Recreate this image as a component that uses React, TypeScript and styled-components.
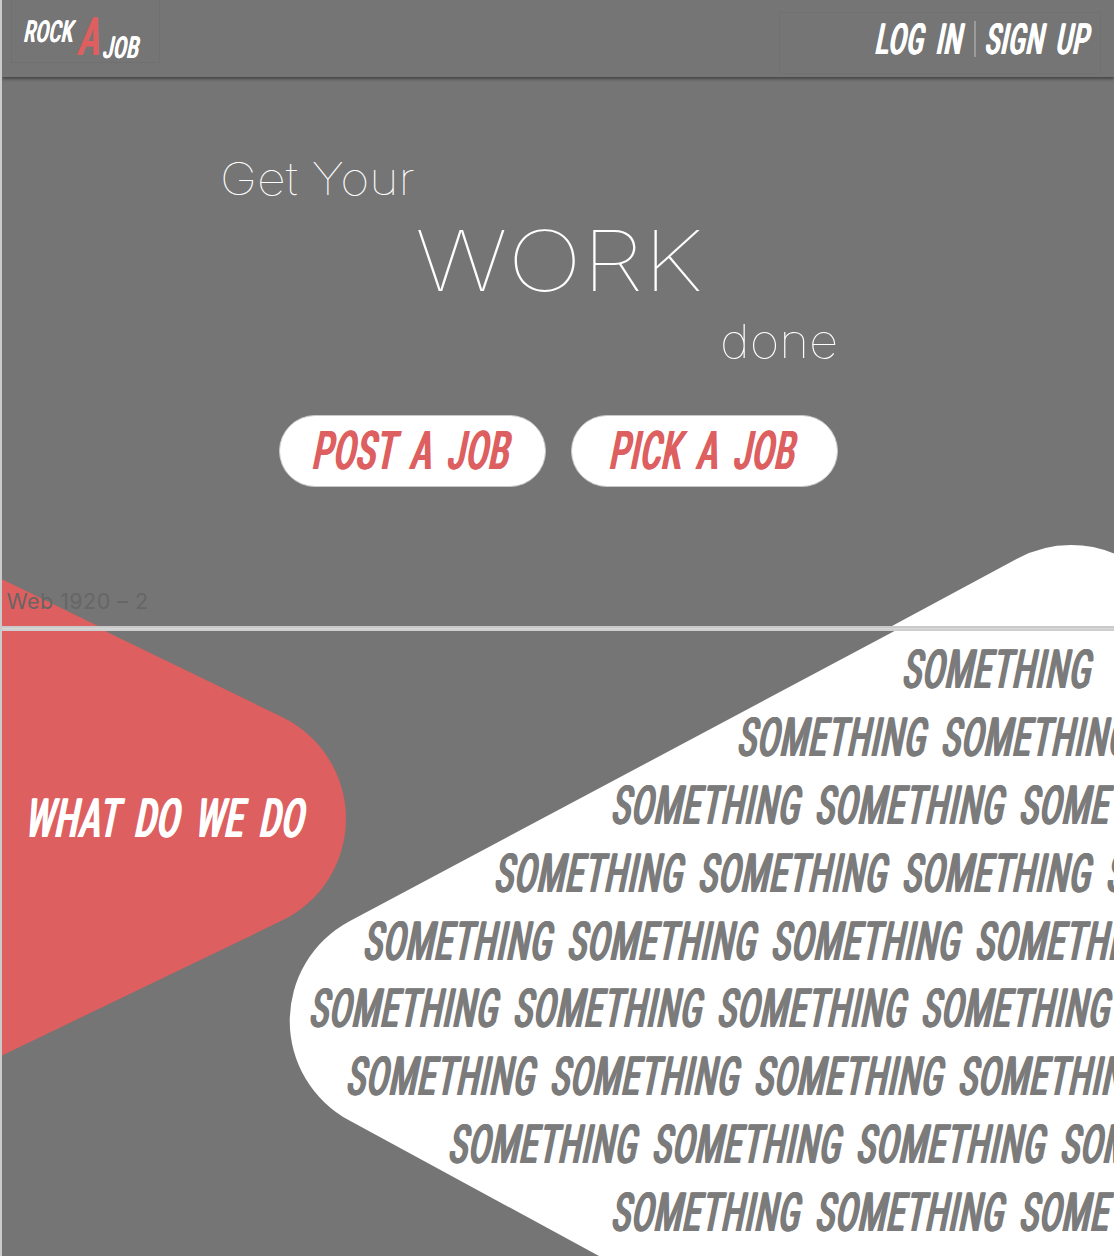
import React, { useLayoutEffect, useRef, useState } from "react";
import styled, { createGlobalStyle } from "styled-components";

const GREY = "#757575";
const RED = "#dd5f5f";

const GlobalStyle = createGlobalStyle`
  html, body { margin: 0; padding: 0; background: ${GREY}; }
  body { overflow: hidden; }
  *, *::before, *::after { box-sizing: border-box; }
`;

const Page = styled.div`
  position: relative;
  display: flex;
  flex-direction: column;
  width: 1114px;
  height: 1256px;
  overflow: hidden;
  background: ${GREY};
  border-left: 2px solid #cbcbcb;
`;

const Shapes = styled.svg`
  position: absolute;
  left: -2px;
  top: 0;
  width: 1114px;
  height: 1256px;
`;

const FitBox = styled.span<{ $w: number; $cap: number; $color: string }>`
  display: block;
  flex: none;
  width: ${(p) => p.$w}px;
  height: ${(p) => p.$cap}px;
  color: ${(p) => p.$color};
`;

/* The sideways shadows thicken only the upright strokes, which evens out
   the narrowed letters into a single stroke width. */
const Slanted = styled.span<{ $cap: number; $weight: number }>`
  display: inline-block;
  white-space: nowrap;
  font-family: Roboto, "Liberation Sans", sans-serif;
  font-weight: ${(p) => p.$weight};
  font-size: ${(p) => p.$cap / 0.711}px;
  line-height: ${(p) => p.$cap}px;
  letter-spacing: 0.035em;
  margin-right: -0.035em;
  word-spacing: 0.2em;
  text-shadow: -0.025em 0 0 currentColor, 0.025em 0 0 currentColor;
  transform-origin: 0 100%;
`;

const Hairline = styled.span<{ $cap: number; $weight: number }>`
  display: inline-block;
  white-space: nowrap;
  font-family: Inter, Lato, sans-serif;
  font-weight: ${(p) => p.$weight};
  font-size: ${(p) => p.$cap / 0.727}px;
  line-height: ${(p) => p.$cap}px;
  transform-origin: 0 100%;
`;

type FitProps = {
  text: string;
  w: number;
  cap: number;
  color?: string;
  weight?: number;
  thin?: boolean;
};

/* Sets a line of lettering to an exact width, at a given capital height. */
function Fit({ text, w, cap, color = "#fff", weight = 500, thin = false }: FitProps) {
  const ref = useRef<HTMLSpanElement>(null);
  const [scale, setScale] = useState(1);
  useLayoutEffect(() => {
    if (ref.current) setScale(w / ref.current.offsetWidth);
  }, [text, w, cap]);
  const Face = thin ? Hairline : Slanted;
  const lean = thin ? "" : "skewX(-11.5deg) ";
  return (
    <FitBox $w={w} $cap={cap} $color={color}>
      <Face ref={ref} $cap={cap} $weight={weight} style={{ transform: `${lean}scaleX(${scale})` }}>
        {text}
      </Face>
    </FitBox>
  );
}

const Header = styled.header`
  position: relative;
  flex: none;
  display: flex;
  justify-content: space-between;
  height: 77px;
  padding: 0 13px 0 9px;
  box-shadow: 0 2px 3px rgba(0, 0, 0, 0.42);
  background: ${GREY};
`;

const Logo = styled.div`
  display: flex;
  align-items: flex-start;
  width: 149px;
  height: 63px;
  padding-left: 11px;
  border: 1px solid #707070;
  border-top: 0;
`;

const LogoPart = styled.div<{ $top: number; $left?: number }>`
  padding-top: ${(p) => p.$top}px;
  margin-left: ${(p) => p.$left ?? 0}px;
`;

const Account = styled.nav`
  display: flex;
  align-items: flex-start;
  justify-content: flex-end;
  width: 322px;
  height: 62px;
  margin-top: 12px;
  padding: 11px 12.5px 0 0;
  border: 1px solid #717171;
`;

const Link = styled.a`
  display: block;
`;

const Separator = styled.i`
  width: 2px;
  height: 36px;
  margin: -3px 8px 0 13px;
  background: #9b9b9b;
`;

const Hero = styled.main`
  position: relative;
  flex: none;
  display: flex;
  flex-direction: column;
  height: 549px;
  padding-top: 85px;
`;

const Headline = styled.h1`
  display: flex;
  flex-direction: column;
  margin: 0;
`;

const Step = styled.span<{ $indent: number; $gap: number }>`
  display: block;
  padding-left: ${(p) => p.$indent}px;
  margin-bottom: ${(p) => p.$gap}px;
`;

const Actions = styled.div`
  display: flex;
  gap: 25px;
  padding-left: 277px;
`;

const Pill = styled.button<{ $inset: number }>`
  display: flex;
  align-items: flex-start;
  width: 267px;
  height: 72px;
  padding: 16px 0 0 ${(p) => p.$inset}px;
  border: 1px solid #c9c9c9;
  border-radius: 36px;
  background: #fff;
`;

const Caption = styled.div`
  margin-top: 100px;
  padding-left: 4.5px;
  font: 400 21.5px/28px Inter, sans-serif;
  letter-spacing: 0.45px;
  color: #666;
`;

const Rule = styled.hr`
  position: relative;
  flex: none;
  width: 100%;
  height: 5px;
  margin: 0;
  border: 0;
  background: linear-gradient(#cacaca 0 2px, #d8d8d8 2px 3px, #cfcfcf 3px 5px);
`;

const Lower = styled.section`
  position: relative;
  flex: 1;
  display: grid;
  grid-template-columns: 1fr;
`;

const Question = styled.h2`
  grid-area: 1 / 1;
  margin: 0;
  padding: 169px 0 0 22px;
`;

const Lines = styled.div`
  grid-area: 1 / 1;
  display: flex;
  flex-direction: column;
  gap: 28.4px;
  min-width: 0;
  padding-top: 20px;
`;

const Line = styled.div<{ $indent: number }>`
  display: flex;
  gap: 15px;
  height: 39.5px;
  padding-left: ${(p) => p.$indent - 4.5}px;
`;

const lines = [
  { indent: 903, words: 1 },
  { indent: 738, words: 2 },
  { indent: 612.5, words: 3 },
  { indent: 495.5, words: 4 },
  { indent: 364.5, words: 4 },
  { indent: 310.5, words: 4 },
  { indent: 347.5, words: 4 },
  { indent: 449.5, words: 4 },
  { indent: 612.5, words: 3 },
];

export default function App() {
  return (
    <>
      <GlobalStyle />
      <Page>
        <Shapes viewBox="0 0 1114 1256" aria-hidden="true">
          <path d="M2 579.3L98 626L105 631L282 717A113 113 0 0 1 282 920.6L2 1055.5Z" fill={RED} />
          <path
            d="M349 921.5L894.5 631L892 626L1017 558.7A113 113 0 0 1 1125 558.7V1256H599L349 1120.3A113 113 0 0 1 349 921.5Z"
            fill="#fff"
          />
        </Shapes>
        <Header>
          <Logo>
            <LogoPart $top={20.5}>
              <Fit text="ROCK" w={49.5} cap={21.5} />
            </LogoPart>
            <LogoPart $top={19} $left={4}>
              <Fit text="A" w={22} cap={37.5} color={RED} />
            </LogoPart>
            <LogoPart $top={37} $left={3}>
              <Fit text="JOB" w={36} cap={21.5} />
            </LogoPart>
          </Logo>
          <Account>
            <Link>
              <Fit text="LOG IN" w={87} cap={30.5} />
            </Link>
            <Separator />
            <Link>
              <Fit text="SIGN UP" w={104} cap={30.5} />
            </Link>
          </Account>
        </Header>
        <Hero>
          <Headline>
            <Step $indent={217.5} $gap={35}>
              <Fit thin text="Get Your" w={194.5} cap={33} weight={100} />
            </Step>
            <Step $indent={412.5} $gap={33}>
              <Fit thin text="WORK" w={287.5} cap={61} weight={100} />
            </Step>
            <Step $indent={718} $gap={57}>
              <Fit thin text="done" w={118} cap={34} weight={100} />
            </Step>
          </Headline>
          <Actions>
            <Pill $inset={31}>
              <Fit text="POST A JOB" w={197} cap={38} color={RED} />
            </Pill>
            <Pill $inset={36}>
              <Fit text="PICK A JOB" w={185.5} cap={38} color={RED} />
            </Pill>
          </Actions>
          <Caption>Web 1920 – 2</Caption>
        </Hero>
        <Rule />
        <Lower>
          <Question>
            <Fit text="WHAT DO WE DO" w={279} cap={38.5} />
          </Question>
          <Lines>
            {lines.map((line, i) => (
              <Line key={i} $indent={line.indent}>
                {Array.from({ length: line.words }, (_, n) => (
                  <Fit key={n} text="SOMETHING" w={189} cap={38.5} color="#7b7b7b" />
                ))}
              </Line>
            ))}
          </Lines>
        </Lower>
      </Page>
    </>
  );
}
